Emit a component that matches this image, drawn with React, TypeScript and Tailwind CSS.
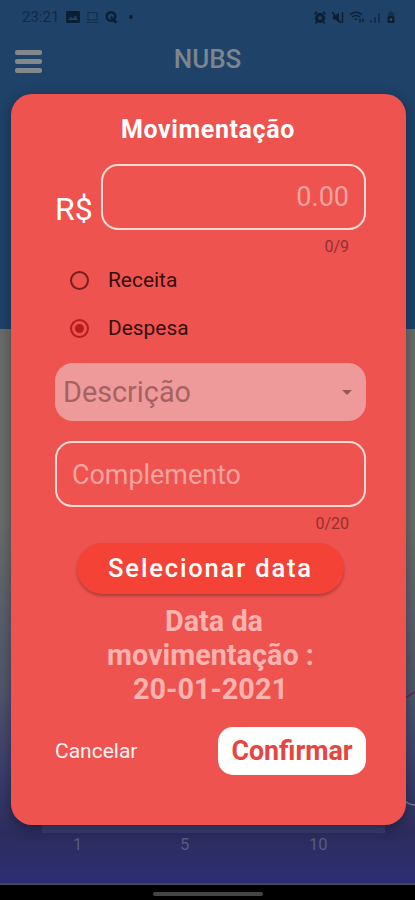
import type { ReactNode } from 'react';
import clsx from 'clsx';

const options = [
  { label: 'Receita', checked: false },
  { label: 'Despesa', checked: true },
];

const StatusBar = () => (
  <div className="flex h-[34px] items-center justify-between pl-[22px] pr-[20px] text-[#0c1f33]">
    <div className="flex items-center">
      <span className="w-[37px] text-[15px] leading-none text-[#132a43]">23:21</span>
      <svg className="ml-[7px]" width="14" height="12" viewBox="0 0 14 12">
        <rect width="14" height="12" rx="1.500" fill="currentColor" />
        <path d="M2 9l3-3.500 2 2 2.500-3L12 9z" fill="#1f4268" />
      </svg>
      <svg className="ml-[6px] opacity-60" width="13" height="13" viewBox="0 0 13 13" fill="none" stroke="currentColor">
        <rect x="2" y="1.500" width="9" height="7.500" />
        <path d="M0.500 11.500h12" />
      </svg>
      <svg className="ml-[6px]" width="13" height="14" viewBox="0 0 13 14" fill="none" stroke="currentColor" strokeWidth="2.400">
        <circle cx="6" cy="6.500" r="4.300" />
        <path d="M6 6.500l2 3.500 3.500 2.500" />
      </svg>
      <span className="ml-[11px] size-[4px] rounded-full bg-current" />
    </div>
    <div className="flex items-center">
      <svg width="12" height="13" viewBox="0 0 12 13" fill="none" stroke="currentColor">
        <circle cx="6" cy="7" r="3.500" strokeWidth="3.200" />
        <path d="M0.500 3L3 1M11.500 3L9 1M3 10.500L1.500 12.500M9 10.500l1.500 2" strokeWidth="1.800" />
      </svg>
      <svg className="ml-[5px]" width="13" height="13" viewBox="0 0 13 13" fill="none" stroke="currentColor">
        <path d="M2 4.500h2.500L8 1.500v10L4.500 8.500H2z" fill="currentColor" stroke="none" />
        <path d="M1 1l9 11M11.500 1v11" strokeWidth="1.500" />
      </svg>
      <svg className="ml-[5px]" width="16" height="13" viewBox="0 0 16 13" fill="none" stroke="currentColor">
        <path d="M1 3.500C5 0.500 9 0.500 13 3.500M3 6c3-2 5-2 8 0M5.500 8.500c1-.8 2-.8 3 0" strokeWidth="1.300" />
        <path d="M11 8v3.500M14 7.500v3.500" strokeWidth="1.500" />
      </svg>
      <svg className="ml-[5px] opacity-70" width="10" height="12" viewBox="0 0 10 12" stroke="currentColor" strokeWidth="1.500">
        <path d="M1 12V9.500M5 12V6M9 12V2" />
      </svg>
      <svg className="ml-[7px]" width="8" height="12" viewBox="0 0 8 12">
        <path d="M3 0h2v1.500h2V5H1V1.500h2z" fill="currentColor" opacity=".5" />
        <rect x="0.500" y="5" width="7" height="7" rx="1.500" fill="currentColor" />
        <circle cx="4" cy="8.500" r="1.200" fill="#3a5570" />
      </svg>
    </div>
  </div>
);

const Header = () => (
  <header className="h-[329px] bg-[#1f4268]">
    <StatusBar />
    <div className="grid h-[50px] grid-cols-[1fr_auto_1fr] items-center">
      <div className="mt-[5px] ml-[15px] flex w-[27px] flex-col gap-[4px]">
        <span className="h-[5px] rounded-[2px] bg-[#84888c]" />
        <span className="h-[5px] rounded-[2px] bg-[#84888c]" />
        <span className="h-[5px] rounded-[2px] bg-[#84888c]" />
      </div>
      <h1 className="text-[26px] font-medium leading-none text-[#7d858d]">NUBS</h1>
    </div>
  </header>
);

const Chart = () => (
  <div className="relative flex h-[554px] flex-col justify-end bg-[linear-gradient(to_bottom,#6b6c6a_34%,#50536c_66%,#3b3e6c_80%,#2c2d5e_91%,#2c2e72)]">
    <svg className="absolute right-0 top-[351px]" width="10" height="130" viewBox="0 0 10 130" fill="none">
      <path d="M0 18L10 12" stroke="#6b2450" strokeWidth="1.500" />
      <path d="M0 121q5 4 10 4" stroke="#777d94" strokeWidth="1.500" />
    </svg>
    <div className="ml-[42px] mr-[30px] h-[10px] bg-[#3a3c74]" />
    <div className="flex h-[50px] pt-[5px] text-[16.500px] leading-[14px] text-[#595c7c]">
      <span className="ml-[73px] w-[107px]">1</span>
      <span className="w-[129px]">5</span>
      <span>10</span>
    </div>
  </div>
);

const Counter = ({ children }: { children: ReactNode }) => (
  <p className="mt-[8px] pr-[17px] text-right text-[16px] leading-[17px] text-[#8f3230]">{children}</p>
);

const Radio = ({ label, checked }: { label: string; checked: boolean }) => (
  <div className="flex h-[48px] items-center pl-[15px]">
    <span
      className={clsx(
        'flex size-[19px] items-center justify-center rounded-full border-2',
        checked ? 'border-[#b51d1d]' : 'border-[#761f1e]'
      )}
    >
      {checked && <span className="size-[9px] rounded-full bg-[#b51d1d]" />}
    </span>
    <span className="ml-[19px] text-[20.900px] leading-none text-[#35100f]">{label}</span>
  </div>
);

const MovementDialog = () => (
  <div
    role="dialog"
    className="absolute left-[10.500px] right-[9.500px] top-[94px] flex h-[731px] flex-col rounded-[21px] bg-[#ee534f] pl-[44.500px] pr-[39.500px] pt-[19px] shadow-[0_4px_14px_rgba(0,0,0,0.35)]"
  >
    <h2 className="pr-[5px] pt-px text-center text-[25px] font-bold leading-[31px] tracking-[0.600px] text-white">Movimentação</h2>

    <div className="mt-[19px] flex h-[66px]">
      <span className="mt-[28px] w-[46px] text-[32px] leading-[34px] text-white">R$</span>
      <div className="flex flex-1 items-center justify-end rounded-[17px] border-2 border-[#fdd9d7] pr-[15px] text-[27px] text-[#f8a3a0]">
        0.00
      </div>
    </div>
    <Counter>0/9</Counter>

    <div className="mt-px">
      {options.map((option) => (
        <Radio key={option.label} {...option} />
      ))}
    </div>

    <div className="mt-[11px] flex h-[58px] items-center justify-between rounded-[18px] bg-[#ef9a9a] pl-[8px] pr-[14px]">
      <span className="pt-px text-[28.800px] leading-none text-[#a46362]">Descrição</span>
      <svg width="10" height="5" viewBox="0 0 10 5" fill="#9d5454">
        <path d="M0 0h10L5 5z" />
      </svg>
    </div>

    <div className="mt-[20px] flex h-[66px] items-center rounded-[17px] border-2 border-[#fdd9d7] pl-[15px] pt-[2px] text-[26.900px] text-[#f8a3a0]">
      Complemento
    </div>
    <Counter>0/20</Counter>

    <button className="mx-auto mt-[11px] h-[51px] w-[267px] shrink-0 rounded-full bg-[#f44336] text-[25.600px] font-medium tracking-[1.800px] text-white shadow-[0_2px_3px_rgba(0,0,0,0.28)]">
      Selecionar data
    </button>

    <p className="mt-[10px] text-center text-[28.800px] font-bold leading-[34px] text-[#fbb3b0]">
      <span className="pl-[7px]">Data da</span>
      <br />
      movimentação :
      <br />
      20-01-2021
    </p>

    <div className="mt-[21px] flex h-[48px] items-center justify-between">
      <button className="pt-px text-[21px] text-[#fff3f2]">Cancelar</button>
      <button className="h-full w-[148px] rounded-[15px] bg-white pt-px text-[26.800px] font-bold text-[#e5463f]">Confirmar</button>
    </div>
  </div>
);

export default function App() {
  return (
    <div className="relative h-[900px] w-[415px] overflow-hidden bg-black font-[Roboto,sans-serif]">
      <Header />
      <Chart />
      <div className="flex h-[17px] items-center justify-center border-t-2 border-[#45475f] pt-[2px]">
        <span className="h-[4px] w-[110px] rounded-full bg-[#454545]" />
      </div>
      <MovementDialog />
    </div>
  );
}
